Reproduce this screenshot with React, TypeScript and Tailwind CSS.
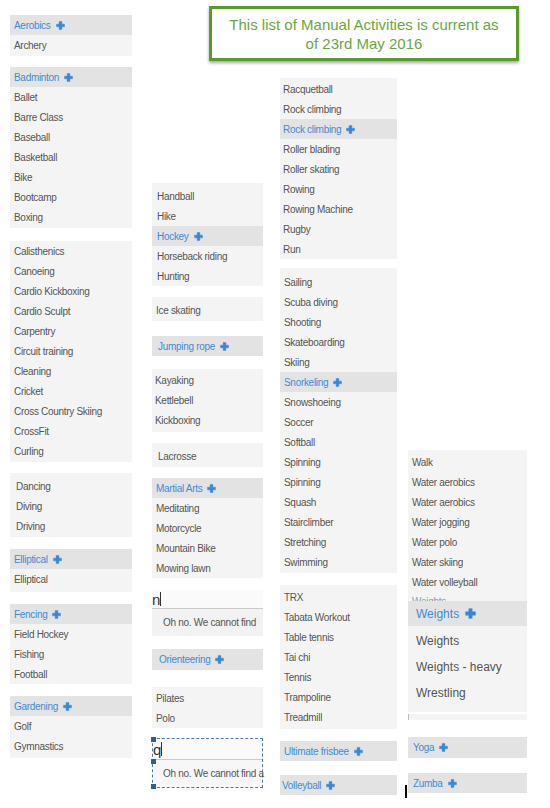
import React from "react";

type Item = { t: string; h?: boolean };

// "+" prefix marks the highlighted (blue) row
const list = (s: string): Item[] =>
  s.split("|").map((x) => (x.startsWith("+") ? { t: x.slice(1), h: true } : { t: x }));

const Plus: React.FC<{ big?: boolean }> = ({ big }) => (
  <svg
    width={big ? 11 : 9}
    height={big ? 11 : 9}
    viewBox="0 0 10 10"
    className={big ? "ml-[6px] shrink-0" : "ml-[5px] shrink-0"}
  >
    <path
      d="M3.5 0.6h3v2.9h2.9v3H6.5v2.9h-3V6.5H0.6v-3h2.9z"
      fill="#3a86d6"
      stroke="#3a86d6"
      strokeWidth="0.5"
      strokeLinejoin="round"
    />
  </svg>
);

const Row: React.FC<{ item: Item; pad: string }> = ({ item, pad }) => (
  <div
    className={`h-[20px] flex items-center whitespace-nowrap overflow-hidden ${pad} ${
      item.h ? "bg-[#e3e3e3] text-[#3f8ad8]" : "text-[#555]"
    }`}
  >
    {item.t}
    {item.h && <Plus />}
  </div>
);

const Block: React.FC<{ items: string; box: string; pad?: string }> = ({
  items,
  box,
  pad = "pl-[4px]",
}) => (
  <div className={`bg-[#f4f4f4] flex flex-col ${box}`}>
    {list(items).map((it, i) => (
      <Row key={i} item={it} pad={pad} />
    ))}
  </div>
);

const Header: React.FC<{ label: string; box: string; pad?: string }> = ({
  label,
  box,
  pad = "pl-[4px]",
}) => (
  <div
    className={`bg-[#e3e3e3] text-[#3f8ad8] flex items-center whitespace-nowrap ${pad} ${box}`}
  >
    {label}
    <Plus />
  </div>
);

export default function App() {
  return (
    <div className="w-[550px] h-[808px] bg-white flex overflow-hidden font-['Liberation_Sans',Arial,sans-serif] text-[10px] tracking-[-0.3px]">
      {/* first column */}
      <div className="ml-[10px] w-[122px] flex flex-col">
        <Block items="+Aerobics|Archery" box="mt-[15px] pb-[1px]" />
        <Block
          items="+Badminton|Ballet|Barre Class|Baseball|Basketball|Bike|Bootcamp|Boxing"
          box="mt-[11px] pb-[1px]"
        />
        <Block
          items="Calisthenics|Canoeing|Cardio Kickboxing|Cardio Sculpt|Carpentry|Circuit training|Cleaning|Cricket|Cross Country Skiing|CrossFit|Curling"
          box="mt-[13px] pb-[1px]"
        />
        <Block items="Dancing|Diving|Driving" box="mt-[11px] pt-[3px] pb-[1px]" pad="pl-[6px]" />
        <Block items="+Elliptical|Elliptical" box="mt-[12px] pb-[3px]" />
        <Block items="+Fencing|Field Hockey|Fishing|Football" box="mt-[12px]" />
        <Block items="+Gardening|Golf|Gymnastics" box="mt-[12px] pb-[2px]" />
      </div>

      <div className="ml-[20px] flex-1 flex flex-col">
        {/* note */}
        <div className="mt-[6px] ml-[57px] w-[310px] h-[55px] border-[3px] border-[#5b992d] shadow-[0_2px_3px_rgba(0,0,0,0.35)] flex items-center justify-center text-center text-[15px] leading-[19px] tracking-normal text-[#6aa63f]">
          This list of Manual Activities is current as
          <br />
          of 23rd May 2016
        </div>

        <div className="flex relative">
          {/* second column */}
          <div className="w-[111px] flex flex-col">
            <Block
              items="Handball|Hike|+Hockey|Horseback riding|Hunting"
              box="mt-[122px] pt-[3px]"
              pad="pl-[5px]"
            />
            <Block items="Ice skating" box="mt-[11px] pt-[3px] pb-[1px]" pad="pl-[4px]" />
            <Header label="Jumping rope" box="mt-[15px] h-[20px]" pad="pl-[6px]" />
            <Block items="Kayaking|Kettlebell|Kickboxing" box="mt-[13px] pt-[1px] pb-[2px]" pad="pl-[3px]" />
            <Block items="Lacrosse" box="mt-[11px] pt-[3px] pb-[1px]" pad="pl-[6px]" />
            <Block
              items="+Martial Arts|Meditating|Motorcycle|Mountain Bike|Mowing lawn"
              box="mt-[11px]"
            />
            <div className="mt-[12px] h-[19px] bg-[#fafafa] border-b border-[#c9c9c9] flex items-center text-[15px] leading-none text-[#333] tracking-normal">
              n<span className="w-px h-[14px] bg-[#333]" />
            </div>
            <div className="h-[27px] bg-[#f2f2f2] flex items-center pl-[11px] text-[#555] whitespace-nowrap">
              Oh no. We cannot find
            </div>
            <Header label="Orienteering" box="mt-[13px] h-[21px]" pad="pl-[7px]" />
            <Block items="Pilates|Polo" box="mt-[17px] pt-[1px]" />
            <div className="mt-[10px] h-[50px] relative border border-dashed border-[#4a79b0] flex flex-col">
              <div className="h-[21px] bg-[#fafafa] border-b border-[#c9c9c9] flex items-center text-[15px] leading-none text-[#333] tracking-normal">
                q<span className="w-px h-[14px] bg-[#333]" />
              </div>
              <div className="flex-1 bg-[#f7f7f7] flex items-center pl-[10px] text-[#555] whitespace-nowrap">
                Oh no. We cannot find a
              </div>
              <span className="absolute -left-[2px] -top-[2px] w-[5px] h-[5px] bg-[#2f5f97]" />
              <span className="absolute -left-[2px] top-[20px] w-[5px] h-[5px] bg-[#2f5f97]" />
              <span className="absolute -left-[2px] -bottom-[2px] w-[5px] h-[5px] bg-[#2f5f97]" />
            </div>
          </div>

          {/* third column */}
          <div className="ml-[17px] w-[117px] flex flex-col">
            <Block
              items="Racquetball|Rock climbing|+Rock climbing|Roller blading|Roller skating|Rowing|Rowing Machine|Rugby|Run"
              box="mt-[17px] pt-[1px]"
              pad="pl-[3px]"
            />
            <Block
              items="Sailing|Scuba diving|Shooting|Skateboarding|Skiing|+Snorkeling|Snowshoeing|Soccer|Softball|Spinning|Spinning|Squash|Stairclimber|Stretching|Swimming"
              box="mt-[9px] pt-[4px] pb-[1px]"
            />
            <Block
              items="TRX|Tabata Workout|Table tennis|Tai chi|Tennis|Trampoline|Treadmill"
              box="mt-[12px] pt-[2px] pb-[2px]"
            />
            <Header label="Ultimate frisbee" box="mt-[12px] h-[20px]" pad="pl-[4px]" />
            <Header label="Volleyball" box="mt-[14px] h-[20px]" pad="pl-[2px]" />
          </div>

          {/* text cursor between columns */}
          <span className="absolute left-[253px] top-[724px] w-[2px] h-[13px] bg-black" />

          {/* fourth column */}
          <div className="ml-[11px] w-[119px] flex flex-col">
            <div className="mt-[389px] bg-[#f4f4f4] pt-[2px] pb-[6px] flex flex-col">
              {list(
                "Walk|Water aerobics|Water aerobics|Water jogging|Water polo|Water skiing|Water volleyball"
              ).map((it, i) => (
                <Row key={i} item={it} pad="pl-[4px]" />
              ))}
              <div className="h-[9px] overflow-hidden pl-[4px] text-[#999] leading-[20px]">Weights</div>
              <div className="h-[25px] bg-[#e3e3e3] text-[#3f8ad8] flex items-center pl-[8px] text-[12px] tracking-normal">
                Weights
                <Plus big />
              </div>
              <div className="pt-[2px] flex flex-col text-[12px] tracking-normal text-[#555]">
                <div className="h-[26px] flex items-center pl-[8px]">Weights</div>
                <div className="h-[26px] flex items-center pl-[8px]">Weights - heavy</div>
                <div className="h-[26px] flex items-center pl-[8px]">Wrestling</div>
              </div>
            </div>
            <div className="mt-[2px] h-[6px] bg-[#f4f4f4] border-l border-[#bbb]" />
            <Header label="Yoga" box="mt-[17px] h-[21px]" pad="pl-[5px]" />
            <Header label="Zumba" box="mt-[15px] h-[20px]" pad="pl-[5px]" />
          </div>
        </div>
      </div>
    </div>
  );
}
